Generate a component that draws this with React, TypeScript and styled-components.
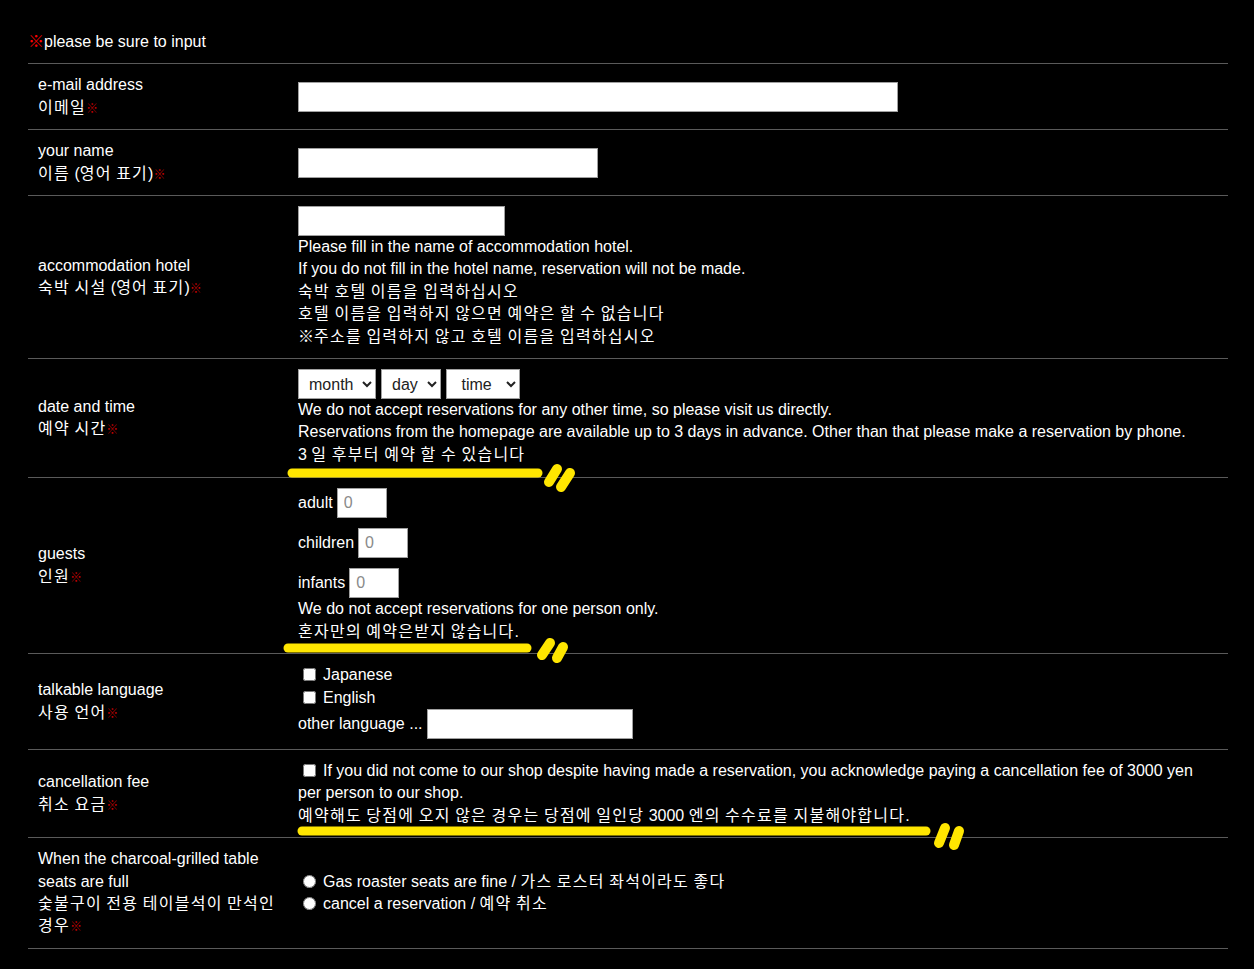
import styled, { createGlobalStyle } from "styled-components";

const GlobalStyle = createGlobalStyle`
    html, body {
        margin: 0;
        padding: 0;
        background: #000;
    }
    body {
        font-family: "Liberation Sans", "Noto Sans CJK KR", Arial, sans-serif;
        font-size: 16px;
        line-height: 22.4px;
        color: #fff;
    }
`;

const Page = styled.div`
    position: relative;
    width: 1254px;
    min-height: 969px;
    padding: 31px 0 0 28px;
    box-sizing: border-box;
`;

const Note = styled.p`
    margin: 0 0 10px;
`;

const Mark = styled.span<{ small?: boolean }>`
    color: ${({ small }) => (small ? "#c00000" : "#ff0000")};
    font-size: ${({ small }) => (small ? "12px" : "16px")};
    line-height: 1;
`;

// hangul runs get a little extra tracking to match the wider Korean face of the original
const Hangul = styled.span`
    letter-spacing: 1.25px;
`;

const Table = styled.div`
    width: 1200px;
    border-top: 1px solid #5a5a5a;
`;

const Row = styled.div`
    display: grid;
    grid-template-columns: 270px 1fr;
    border-bottom: 1px solid #5a5a5a;
`;

const Label = styled.div`
    padding: 10px;
    display: flex;
    flex-direction: column;
    justify-content: center;
`;

const Value = styled.div<{ pb?: number }>`
    padding: 10px 20px ${({ pb }) => pb ?? 10}px 0;
    align-self: center;
`;

const TextInput = styled.input<{ w: number }>`
    display: block;
    width: ${({ w }) => w}px;
    height: 30px;
    box-sizing: border-box;
    border: 1px solid #a0a0a0;
    background: #fff;
    font: 16px "Liberation Sans", Arial, sans-serif;
    padding: 0 6px;
    margin: 0;
`;

const Line = styled.div`
    display: flex;
    align-items: center;
    gap: 4px;
`;

const Counts = styled.div`
    display: flex;
    flex-direction: column;
    gap: 10px;
`;

const CountLine = styled(Line)`
    height: 30px;
`;

const SelectRow = styled.div`
    display: flex;
    gap: 5px;
    height: 30px;
`;

const Select = styled.select<{ w: number }>`
    width: ${({ w }) => w}px;
    height: 30px;
    box-sizing: border-box;
    border: 1px solid #a0a0a0;
    border-radius: 0;
    background: #fff;
    color: #222;
    font: 16px "Liberation Sans", Arial, sans-serif;
    padding: 0 4px 0 6px;
`;

const NumberInput = styled.input`
    width: 50px;
    height: 30px;
    box-sizing: border-box;
    border: 1px solid #a0a0a0;
    background: #fff;
    font: 16px "Liberation Sans", Arial, sans-serif;
    padding: 0 6px;
    margin: 0;

    &::placeholder {
        color: #8a8a8a;
    }
`;

const Check = styled.label`
    display: block;
`;

const Box = styled.input`
    width: 13px;
    height: 13px;
    margin: 0 7px 0 5px;
    vertical-align: -1px;
`;

const Overlay = styled.svg`
    position: absolute;
    top: 0;
    left: 0;
    pointer-events: none;
`;

function K({ children }: { children: string }) {
    const parts = children.split(/([\uac00-\ud7a3]+)/);
    return (
        <>
            {parts.map((p, i) => (i % 2 ? <Hangul key={i}>{p}</Hangul> : p))}
        </>
    );
}

function Req() {
    return <Mark small>※</Mark>;
}

function Scribble({ x1, x2, y, s }: { x1: number; x2: number; y: number; s: number[][] }) {
    return (
        <g stroke="#ffe600" strokeLinecap="round" fill="none">
            <line x1={x1} y1={y} x2={x2} y2={y} strokeWidth={9} />
            {s.map(([a, b, c, d], i) => (
                <line key={i} x1={a} y1={b} x2={c} y2={d} strokeWidth={10} />
            ))}
        </g>
    );
}

export default function App() {
    return (
        <Page>
            <GlobalStyle />
            <Note>
                <Mark>※</Mark>please be sure to input
            </Note>
            <Table>
                <Row>
                    <Label>
                        <div>e-mail address</div>
                        <div><K>이메일</K><Req /></div>
                    </Label>
                    <Value>
                        <TextInput w={600} type="text" />
                    </Value>
                </Row>
                <Row>
                    <Label>
                        <div>your name</div>
                        <div><K>이름 (영어 표기)</K><Req /></div>
                    </Label>
                    <Value>
                        <TextInput w={300} type="text" />
                    </Value>
                </Row>
                <Row>
                    <Label>
                        <div>accommodation hotel</div>
                        <div><K>숙박 시설 (영어 표기)</K><Req /></div>
                    </Label>
                    <Value>
                        <TextInput w={207} type="text" />
                        <div>Please fill in the name of accommodation hotel.</div>
                        <div>If you do not fill in the hotel name, reservation will not be made.</div>
                        <div><K>숙박 호텔 이름을 입력하십시오</K></div>
                        <div><K>호텔 이름을 입력하지 않으면 예약은 할 수 없습니다</K></div>
                        <div><K>※주소를 입력하지 않고 호텔 이름을 입력하십시오</K></div>
                    </Value>
                </Row>
                <Row>
                    <Label>
                        <div>date and time</div>
                        <div><K>예약 시간</K><Req /></div>
                    </Label>
                    <Value pb={11}>
                        <SelectRow>
                            <Select w={78}><option>month</option></Select>
                            <Select w={60}><option>day</option></Select>
                            <Select w={74}><option>&nbsp;time</option></Select>
                        </SelectRow>
                        <div>We do not accept reservations for any other time, so please visit us directly.</div>
                        <div>Reservations from the homepage are available up to 3 days in advance. Other than that please make a reservation by phone.</div>
                        <div><K>3 일 후부터 예약 할 수 있습니다</K></div>
                    </Value>
                </Row>
                <Row>
                    <Label>
                        <div>guests</div>
                        <div><K>인원</K><Req /></div>
                    </Label>
                    <Value>
                        <Counts>
                            <CountLine>adult <NumberInput type="number" placeholder="0" /></CountLine>
                            <CountLine>children <NumberInput type="number" placeholder="0" /></CountLine>
                            <CountLine>infants <NumberInput type="number" placeholder="0" /></CountLine>
                        </Counts>
                        <div>We do not accept reservations for one person only.</div>
                        <div><K>혼자만의 예약은받지 않습니다.</K></div>
                    </Value>
                </Row>
                <Row>
                    <Label>
                        <div>talkable language</div>
                        <div><K>사용 언어</K><Req /></div>
                    </Label>
                    <Value>
                        <Check><Box type="checkbox" />Japanese</Check>
                        <Check><Box type="checkbox" />English</Check>
                        <Line>
                            other language ... <TextInput w={206} type="text" />
                        </Line>
                    </Value>
                </Row>
                <Row>
                    <Label>
                        <div>cancellation fee</div>
                        <div><K>취소 요금</K><Req /></div>
                    </Label>
                    <Value>
                        <div>
                            <Box type="checkbox" />If you did not come to our shop despite having made a reservation, you acknowledge paying a cancellation fee of 3000 yen per person to our shop.
                        </div>
                        <div><K>예약해도 당점에 오지 않은 경우는 당점에 일인당 3000 엔의 수수료를 지불해야합니다.</K></div>
                    </Value>
                </Row>
                <Row>
                    <Label>
                        <div>When the charcoal-grilled table seats are full</div>
                        <div><K>숯불구이 전용 테이블석이 만석인 경우</K><Req /></div>
                    </Label>
                    <Value>
                        <Check><Box type="radio" name="seat" />Gas roaster seats are fine / <K>가스 로스터 좌석이라도 좋다</K></Check>
                        <Check><Box type="radio" name="seat" />cancel a reservation / <K>예약 취소</K></Check>
                    </Value>
                </Row>
            </Table>
            <Overlay width={1254} height={969} viewBox="0 0 1254 969">
                <Scribble x1={292} x2={538} y={473} s={[[557, 469, 549, 482], [570, 473, 561, 487]]} />
                <Scribble x1={288} x2={527} y={648} s={[[550, 643, 542, 655], [563, 647, 557, 658]]} />
                <Scribble x1={302} x2={926} y={831} s={[[945, 828, 939, 843], [959, 831, 954, 845]]} />
            </Overlay>
        </Page>
    );
}
